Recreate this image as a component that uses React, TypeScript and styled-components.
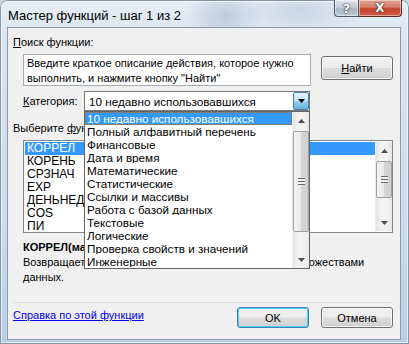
import styled, { createGlobalStyle } from 'styled-components';

const GlobalStyle = createGlobalStyle`
  html, body { margin: 0; padding: 0; background: #c9d8e7; }
  body { font-family: "Liberation Sans", Arial, sans-serif; font-size: 11px; color: #000; }
`;

const Window = styled.div`
  position: relative;
  width: 409px;
  height: 344px;
  box-sizing: border-box;
  display: flex;
  flex-direction: column;
  padding: 0 8px 4px 7px;
  border-radius: 7px 7px 0 0;
  background:
    radial-gradient(ellipse 40px 30px at 225px 15px, rgba(120, 150, 185, 0.35), transparent),
    radial-gradient(ellipse 60px 25px at 300px 10px, rgba(140, 165, 195, 0.3), transparent),
    linear-gradient(to bottom, #e6edf5 0%, #dae4ee 12%, #cfdceb 60%, #b8cfe6 100%);
  box-shadow: inset 0 0 0 1px #8796a8, inset 0 0 0 2px rgba(255, 255, 255, 0.6);
  overflow: hidden;
`;

const TitleBar = styled.div`
  height: 27px;
  display: flex;
  justify-content: space-between;
  align-items: flex-start;
`;

const Title = styled.div`
  padding: 8px 0 0 1px;
  font-size: 13px;
  line-height: 15px;
`;

const CaptionButtons = styled.div`
  display: flex;
  margin-right: -1px;
`;

const CaptionButton = styled.div<{ $close?: boolean }>`
  width: ${p => (p.$close ? 43 : 25)}px;
  height: 17px;
  box-sizing: border-box;
  border: 1px solid ${p => (p.$close ? '#5d2a24' : '#4d5866')};
  border-top: none;
  border-radius: ${p => (p.$close ? '0 0 4px 0' : '0 0 0 4px')};
  ${p => (p.$close ? 'border-left: none;' : '')}
  background: ${p =>
    p.$close
      ? 'linear-gradient(to bottom, #e3a594 0%, #d07a66 45%, #c3402a 55%, #d0604a 100%)'
      : 'linear-gradient(to bottom, #dfe6ee 0%, #c3ced9 45%, #a8b6c4 55%, #bccad7 100%)'};
  box-shadow: inset 0 0 0 1px rgba(255, 255, 255, 0.45);
  display: flex;
  align-items: center;
  justify-content: center;
  color: #fff;
  font-family: "DejaVu Sans", sans-serif;
  font-weight: bold;
  font-size: ${p => (p.$close ? 12 : 13)}px;
  text-shadow: 0 0 2px #333, 0 0 1px #000;
`;

const Client = styled.div`
  flex: 1;
  display: flex;
  flex-direction: column;
  background: #f0f0f0;
  border: 1px solid #8c9aab;
  padding: 7px 7px 0 5px;
`;

const Label = styled.div<{ $top?: number }>`
  line-height: 15px;
  margin-top: ${p => p.$top ?? 0}px;
  white-space: nowrap;
`;

const Accel = styled.span`
  text-decoration: underline;
`;

const SearchRow = styled.div`
  display: flex;
  align-items: flex-start;
  gap: 10px;
  margin: 4px 0 0 10px;
`;

const TextBox = styled.div`
  width: 288px;
  height: 32px;
  box-sizing: border-box;
  background: #fff;
  border: 1px solid #a5acb5;
  padding: 1px 3px;
  line-height: 15px;
  white-space: nowrap;
`;

const Button = styled.div<{ $default?: boolean }>`
  width: 72px;
  height: ${p => (p.$default !== undefined ? 21 : 24)}px;
  margin-top: ${p => (p.$default !== undefined ? 0 : 2)}px;
  box-sizing: border-box;
  border: 1px solid ${p => (p.$default ? '#3c7fb1' : '#707070')};
  border-radius: 3px;
  background: linear-gradient(to bottom, #f2f2f2 0%, #ebebeb 48%, #dddddd 52%, #cfcfcf 100%);
  box-shadow: inset 0 0 0 1px ${p => (p.$default ? '#48d1fb' : 'rgba(255,255,255,0.7)')};
  display: flex;
  align-items: center;
  justify-content: center;
`;

const CategoryRow = styled.div`
  display: flex;
  align-items: center;
  margin: 5px 0 0 10px;
`;

const CategoryLabel = styled.div`
  width: 61px;
  line-height: 15px;
`;

const ComboWrap = styled.div`
  position: relative;
  width: 226px;
`;

const Combo = styled.div`
  height: 20px;
  box-sizing: border-box;
  background: #fff;
  border: 1px solid #7a7a7a;
  display: flex;
  align-items: center;
  padding-left: 4px;
  font-size: 11.7px;
`;

const ComboText = styled.div`
  flex: 1;
`;

const ComboArrow = styled.div`
  width: 16px;
  height: 18px;
  box-sizing: border-box;
  border: 1px solid #3c7fb1;
  border-radius: 2px;
  background: linear-gradient(to bottom, #e5f4fc 0%, #c4e5f6 48%, #98d1ef 52%, #68b3db 100%);
  display: flex;
  align-items: center;
  justify-content: center;
`;

const Popup = styled.div`
  position: absolute;
  top: 100%;
  left: 0;
  width: 226px;
  height: 158px;
  box-sizing: border-box;
  background: #fff;
  border: 1px solid #646464;
  display: flex;
  z-index: 5;
  font-size: 11.7px;
`;

const PopupItems = styled.div`
  flex: 1;
  display: flex;
  flex-direction: column;
`;

const PopupItem = styled.div<{ $selected?: boolean }>`
  height: 13px;
  line-height: 12px;
  box-sizing: border-box;
  padding-left: 1px;
  white-space: nowrap;
  overflow: hidden;
  background: ${p => (p.$selected ? '#3399ff' : 'transparent')};
  color: ${p => (p.$selected ? '#fff' : '#000')};
  border: 1px dotted ${p => (p.$selected ? '#cc6600' : 'transparent')};
`;

const ScrollBar = styled.div`
  width: 17px;
  display: flex;
  flex-direction: column;
  background: linear-gradient(to right, #e3e3e3 0%, #f2f2f2 30%, #f2f2f2 70%, #e6e6e6 100%);
  border-left: 1px solid #ececec;
  box-sizing: border-box;
`;

const ScrollArrow = styled.div`
  height: 17px;
  display: flex;
  align-items: center;
  justify-content: center;
`;

const ScrollTrack = styled.div`
  flex: 1;
  display: flex;
  flex-direction: column;
`;

const Thumb = styled.div<{ $top: number; $height: number }>`
  margin: ${p => p.$top}px 0 0 0;
  height: ${p => p.$height}px;
  box-sizing: border-box;
  border: 1px solid #a0a0a0;
  border-radius: 2px;
  background: linear-gradient(to right, #f4f4f4 0%, #e8e8e8 50%, #d6d6d6 51%, #d0d0d0 100%);
  display: flex;
  align-items: center;
  justify-content: center;
`;

const Grip = styled.div`
  width: 7px;
  height: 7px;
  background: repeating-linear-gradient(to bottom, #6a6a6a 0, #6a6a6a 1px, #f0f0f0 1px, #f0f0f0 3px);
`;

const FuncList = styled.div`
  margin: 4px 0 0 10px;
  width: 370px;
  height: 93px;
  box-sizing: border-box;
  background: #fff;
  border: 1px solid #828790;
  display: flex;
  padding: 1px 0 1px 1px;
  font-size: 12px;
`;

const FuncItems = styled.div`
  flex: 1;
  display: flex;
  flex-direction: column;
`;

const FuncItem = styled.div<{ $selected?: boolean }>`
  height: 13px;
  line-height: 13px;
  padding-left: 2px;
  background: ${p => (p.$selected ? '#3399ff' : 'transparent')};
  color: ${p => (p.$selected ? '#fff' : '#000')};
`;

const Signature = styled.div`
  margin: 7px 0 0 10px;
  font-weight: bold;
  line-height: 15px;
  white-space: nowrap;
`;

const Description = styled.div`
  margin-left: 10px;
  line-height: 15px;
  white-space: nowrap;
`;

const Separator = styled.div`
  margin-top: auto;
  border-top: 1px solid #d9dde2;
`;

const Footer = styled.div`
  display: flex;
  align-items: flex-start;
  gap: 12px;
  padding: 4px 0 11px;
`;

const HelpLink = styled.a`
  margin-top: 1px;
  line-height: 15px;
  color: #0000ee;
  text-decoration: underline;
  margin-right: auto;
`;

const popupItems = [
  '10 недавно использовавшихся',
  'Полный алфавитный перечень',
  'Финансовые',
  'Дата и время',
  'Математические',
  'Статистические',
  'Ссылки и массивы',
  'Работа с базой данных',
  'Текстовые',
  'Логические',
  'Проверка свойств и значений',
  'Инженерные',
];

const functions = ['КОРРЕЛ', 'КОРЕНЬ', 'СРЗНАЧ', 'EXP', 'ДЕНЬНЕД', 'COS', 'ПИ'];

const Triangle = ({ up, color = '#000' }: { up?: boolean; color?: string }) => (
  <svg width="7" height="4" viewBox="0 0 7 4">
    <path d={up ? 'M0 4 L3.5 0 L7 4 Z' : 'M0 0 L7 0 L3.5 4 Z'} fill={color} />
  </svg>
);

function Scroll({ top, height }: { top: number; height: number }) {
  return (
    <ScrollBar>
      <ScrollArrow><Triangle up color="#4d4d4d" /></ScrollArrow>
      <ScrollTrack>
        <Thumb $top={top} $height={height}><Grip /></Thumb>
      </ScrollTrack>
      <ScrollArrow><Triangle color="#4d4d4d" /></ScrollArrow>
    </ScrollBar>
  );
}

export default function App() {
  return (
    <>
      <GlobalStyle />
      <Window>
        <TitleBar>
          <Title>Мастер функций - шаг 1 из 2</Title>
          <CaptionButtons>
            <CaptionButton>?</CaptionButton>
            <CaptionButton $close>X</CaptionButton>
          </CaptionButtons>
        </TitleBar>
        <Client>
          <Label><Accel>П</Accel>оиск функции:</Label>
          <SearchRow>
            <TextBox>
              Введите краткое описание действия, которое нужно
              <br />
              выполнить, и нажмите кнопку "Найти"
            </TextBox>
            <Button><Accel>Н</Accel>айти</Button>
          </SearchRow>
          <CategoryRow>
            <CategoryLabel><Accel>К</Accel>атегория:</CategoryLabel>
            <ComboWrap>
              <Combo>
                <ComboText>10 недавно использовавшихся</ComboText>
                <ComboArrow><Triangle /></ComboArrow>
              </Combo>
              <Popup>
                <PopupItems>
                  {popupItems.map((item, i) => (
                    <PopupItem key={item} $selected={i === 0}>{item}</PopupItem>
                  ))}
                </PopupItems>
                <Scroll top={2} height={101} />
              </Popup>
            </ComboWrap>
          </CategoryRow>
          <Label $top={10}>Выберите <Accel>ф</Accel>ункцию:</Label>
          <FuncList>
            <FuncItems>
              {functions.map((f, i) => (
                <FuncItem key={f} $selected={i === 0}>{f}</FuncItem>
              ))}
            </FuncItems>
            <Scroll top={2} height={37} />
          </FuncList>
          <Signature>КОРРЕЛ(массив1;массив2)</Signature>
          <Description>
            Возвращает коэффициент корреляции между двумя множествами
            <br />
            данных.
          </Description>
          <Separator />
          <Footer>
            <HelpLink href="#">Справка по этой функции</HelpLink>
            <Button $default>OK</Button>
            <Button $default={false}>Отмена</Button>
          </Footer>
        </Client>
      </Window>
    </>
  );
}
